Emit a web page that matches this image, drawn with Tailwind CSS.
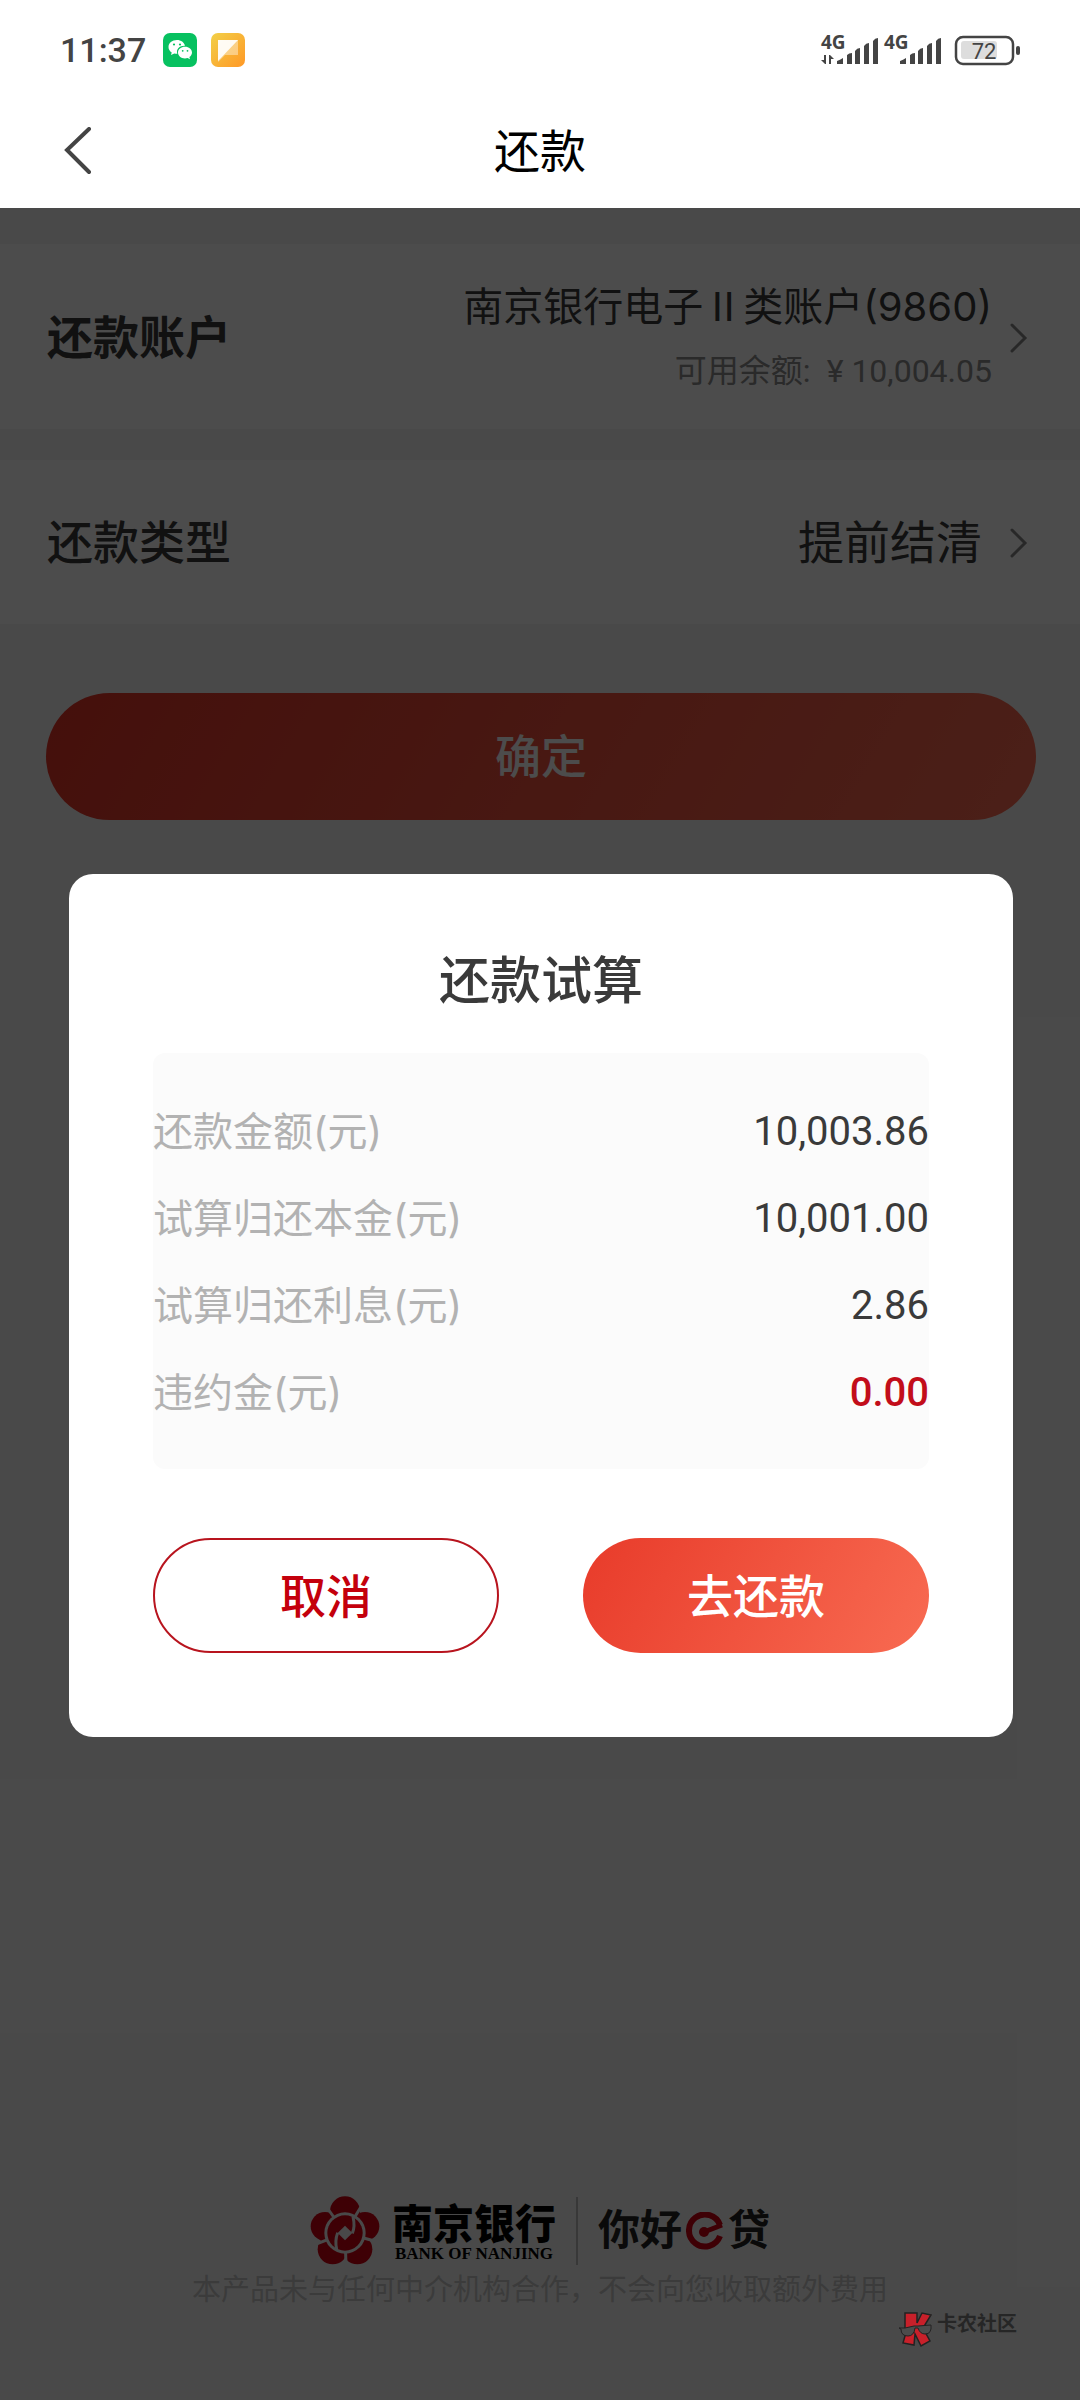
<!DOCTYPE html>
<html lang="zh-CN">
<head>
<meta charset="utf-8">
<meta name="viewport" content="width=device-width, initial-scale=1">
<title>还款</title>
<script src="https://cdn.jsdelivr.net/npm/@tailwindcss/browser@4"></script>
</head>
<body class="flex min-h-screen flex-col bg-white font-[Roboto,'Noto_Sans_CJK_SC',sans-serif] text-[#444]">

<!-- Status bar -->
<div class="flex h-[100px] items-center justify-between pr-[60px] pl-[60px]">
  <div class="flex items-center">
    <span class="w-[103px] text-[34px] leading-10 font-medium">11:37</span>
    <svg class="mr-3.5 size-[34px]" viewBox="0 0 34 34" aria-hidden="true">
      <rect width="34" height="34" rx="7" fill="#07c160"/>
      <path fill="#fff" d="M14 7c-5 0-8.500 3-8.500 7 0 2.300 1.200 4.200 3.200 5.500L8 22l3.300-1.600c1 .2 2 .4 3 .4-1.500-4.700 2.500-8.300 7.700-8-.8-3.500-4-5.800-8-5.800z"/>
      <path fill="#fff" d="M22 13.800c-4 0-7 2.600-7 5.800s3 5.900 7 5.900c.9 0 1.800-.2 2.600-.4l2.400 1.200-.6-2.200c1.600-1 2.600-2.600 2.600-4.500 0-3.200-3-5.800-7-5.800z"/>
      <g fill="#07c160"><circle cx="11" cy="11.500" r="1.100"/><circle cx="17" cy="11.500" r="1.100"/><circle cx="19.700" cy="17.800" r=".9"/><circle cx="24.500" cy="17.800" r=".9"/></g>
    </svg>
    <svg class="size-[34px]" viewBox="0 0 34 34" aria-hidden="true">
      <defs><linearGradient id="note" x1="0" y1="0" x2="1" y2="1"><stop offset="0" stop-color="#f2d048"/><stop offset="1" stop-color="#ff9826"/></linearGradient></defs>
      <rect width="34" height="34" rx="7" fill="url(#note)"/>
      <path d="M7 7h20v15H14L7 29z" fill="#fff" opacity=".4"/>
      <path d="M7 7h20L7 28z" fill="#fff" opacity=".9"/>
    </svg>
  </div>
  <svg class="h-[54px] w-[200px]" viewBox="820 22 200 54" fill="#444" aria-hidden="true">
    <g font-family="Open Sans" font-weight="700" font-size="19"><text x="821" y="48">4G</text><text x="884" y="48">4G</text></g>
    <path d="M824 54h2v9h-1l-4-4h3zM829 63v-9h1l4 4h-3v5z"/>
    <path id="bars" d="M837 63v-3q3-1 6-3v6zM847 63v-9q2-2 5-2v11zM855 63v-13q2-3 5-3v16zM864 63v-18q2-3 5-3v21zM873 63v-23q2-3 5-3v26z"/>
    <use href="#bars" x="63"/>
    <rect x="961" y="40" width="36" height="18" rx="3" fill="#ddd"/>
    <rect x="956" y="36" width="57" height="27" rx="7" fill="none" stroke="#444" stroke-width="2.500"/>
    <rect x="1016" y="45" width="4" height="9" rx="2"/>
    <text x="984" y="58" text-anchor="middle" font-family="Roboto" font-size="22">72</text>
  </svg>
</div>

<!-- Title bar -->
<header class="grid h-[108px] grid-cols-3 items-center px-[62px] pb-1">
  <button type="button" aria-label="返回" class="justify-self-start">
    <svg class="h-[50px] w-8" viewBox="0 0 32 50" fill="none" stroke="#444" stroke-width="4" stroke-linecap="round"><path d="M27 2 5 23l22 22"/></svg>
  </button>
  <h1 class="text-center text-[46px] leading-[60px] text-black">还款</h1>
</header>

<main class="relative flex flex-1 flex-col bg-[#f5f5f5] pt-9 text-[#3a3a3a]">
  <button type="button" class="flex h-[185px] items-center justify-between bg-white pt-0.5 pr-[52px] pl-[47px] text-left">
    <span class="text-[46px] leading-[60px] font-bold">还款账户</span>
    <span class="flex items-center gap-4">
      <span class="flex flex-col items-end gap-1">
        <span class="font-[Inter,'Noto_Sans_CJK_SC',sans-serif] text-[40px] leading-[60px]">南京银行电子<span class="font-['Noto_Sans_CJK_SC',sans-serif]">Ⅱ</span>类账户(9860)</span>
        <span class="text-[32px] leading-[60px] text-[#8c8c8c]"><span class="mr-4">可用余额:</span>¥ 10,004.05</span>
      </span>
      <svg class="h-8 w-5" viewBox="0 0 20 32" fill="none" stroke="#888" stroke-width="3" stroke-linecap="round"><path d="m4 3 13 13L4 29"/></svg>
    </span>
  </button>

  <button type="button" class="mt-[31px] flex h-[164px] items-center justify-between bg-white pt-0.5 pr-[52px] pl-[47px] text-left">
    <span class="text-[46px] leading-[60px] font-medium">还款类型</span>
    <span class="flex items-center gap-[26px]">
      <span class="text-[46px] leading-[60px]">提前结清</span>
      <svg class="h-8 w-5" viewBox="0 0 20 32" fill="none" stroke="#888" stroke-width="3" stroke-linecap="round"><path d="m4 3 13 13L4 29"/></svg>
    </span>
  </button>

  <button type="button" class="mr-11 ml-[46px] mt-[69px] h-[127px] rounded-full bg-linear-[120deg,#e53528,#fb6b52] text-[46px] leading-[60px] font-medium text-white">确定</button>

  <footer class="mt-auto flex flex-col items-center pb-[86px]">
    <div class="flex items-center">
      <svg class="size-[70px]" viewBox="0 0 210 210" aria-hidden="true">
        <g fill="#d00012">
          <circle cx="105" cy="46" r="45"/><circle cx="165" cy="91" r="43"/><circle cx="142" cy="160" r="45"/><circle cx="68" cy="160" r="45"/><circle cx="45" cy="91" r="43"/>
        </g>
        <path d="M105 111 L153 32M105 111 L205 138M105 111 L108 208M105 111 L8 148M105 111 L52 36" stroke="#f5f5f5" stroke-width="9"/>
        <circle cx="105" cy="111" r="62" fill="#f5f5f5"/>
        <circle cx="105" cy="111" r="53" fill="#d00012"/>
        <path d="M105 89l22 22-22 22-22-22z" fill="#f5f5f5"/>
        <path d="M127 112Q136 92 129 62M83 110Q74 134 80 160" fill="none" stroke="#f5f5f5" stroke-width="9"/>
      </svg>
      <div class="ml-3 flex flex-col items-center">
        <span class="font-['Noto_Sans_CJK_SC',sans-serif] text-[41px] leading-[46px] font-black text-black">南京银行</span>
        <span class="font-['Liberation_Serif',serif] text-[17px] leading-5 font-bold text-black">BANK OF NANJING</span>
      </div>
      <div class="mx-5 h-[68px] w-0.5 bg-[#bbb]"></div>
      <div class="flex items-center text-[42px] leading-[60px] font-bold text-[#222]">
        <span>你好</span>
        <svg class="mx-1 size-[38px]" viewBox="0 0 38 38" role="img" aria-label="e"><path d="M34 24a16 16 0 1 1 0-11" fill="none" stroke="#d00012" stroke-width="6"/><path d="m18 20 18-7" stroke="#d00012" stroke-width="5"/><circle cx="18" cy="20" r="5" fill="#d00012"/></svg>
        <span>贷</span>
      </div>
    </div>
    <p class="text-[29px] leading-[48px] text-[#c6c6c6]">本产品未与任何中介机构合作，不会向您收取额外费用</p>
  </footer>

  <!-- Dialog over the dimmed page -->
  <div class="absolute inset-0 flex items-center justify-center bg-black/70 pt-0.5 pr-[67px] pl-[69px]">
    <section role="dialog" aria-modal="true" aria-labelledby="trial" class="w-full rounded-3xl bg-white px-[84px] pt-[78px] pb-[84px]">
      <h2 id="trial" class="text-center text-[51px] leading-[60px] font-medium text-[#3a3a3a]">还款试算</h2>
      <table class="mt-[41px] block rounded-xl bg-[#fbfbfb] pt-9 pb-8 text-[40px]">
        <tbody class="block font-[Roboto,sans-serif]">
          <tr class="flex h-[87px] items-center justify-between"><th scope="row" class="font-[Inter,'Noto_Sans_CJK_SC',sans-serif] font-normal text-[#b2b2b2]">还款金额(元)</th><td>10,003.86</td></tr>
          <tr class="flex h-[87px] items-center justify-between"><th scope="row" class="font-[Inter,'Noto_Sans_CJK_SC',sans-serif] font-normal text-[#b2b2b2]">试算归还本金(元)</th><td>10,001.00</td></tr>
          <tr class="flex h-[87px] items-center justify-between"><th scope="row" class="font-[Inter,'Noto_Sans_CJK_SC',sans-serif] font-normal text-[#b2b2b2]">试算归还利息(元)</th><td>2.86</td></tr>
          <tr class="flex h-[87px] items-center justify-between"><th scope="row" class="font-[Inter,'Noto_Sans_CJK_SC',sans-serif] font-normal text-[#b2b2b2]">违约金(元)</th><td class="font-medium text-[#c20d1a]">0.00</td></tr>
        </tbody>
      </table>
      <div class="mt-[69px] grid grid-cols-2 gap-[84px] text-[46px] leading-[60px] font-medium">
        <button type="button" class="h-[115px] rounded-full border-2 border-[#b8141e] pt-1 text-[#c4000c]">取消</button>
        <button type="button" class="h-[115px] rounded-full bg-linear-[120deg,#e83b2a,#f86b52] pt-1 text-white">去还款</button>
      </div>
    </section>
  </div>

  <div class="absolute right-[63px] bottom-[52px] flex items-center gap-1 text-[#262626]">
    <svg class="h-9 w-[34px]" viewBox="0 0 34 36" aria-hidden="true">
      <path d="M6 1h12v10l5-10 9 2-8 13 7 13-9 5-6-12-1 11-11-2 2-7z" fill="#c8202a" stroke="#222" stroke-width="1.500"/>
      <path d="M0 16h6l9-2h4l13-1q1 9-6 9-5 0-7-6h-3q-1 8-7 8-7 0-7-7z" fill="#4c4c4c" stroke="#222" stroke-width="1"/>
    </svg>
    <span class="pb-3 text-xl leading-6 font-bold">卡农社区</span>
  </div>
</main>
</body>
</html>
